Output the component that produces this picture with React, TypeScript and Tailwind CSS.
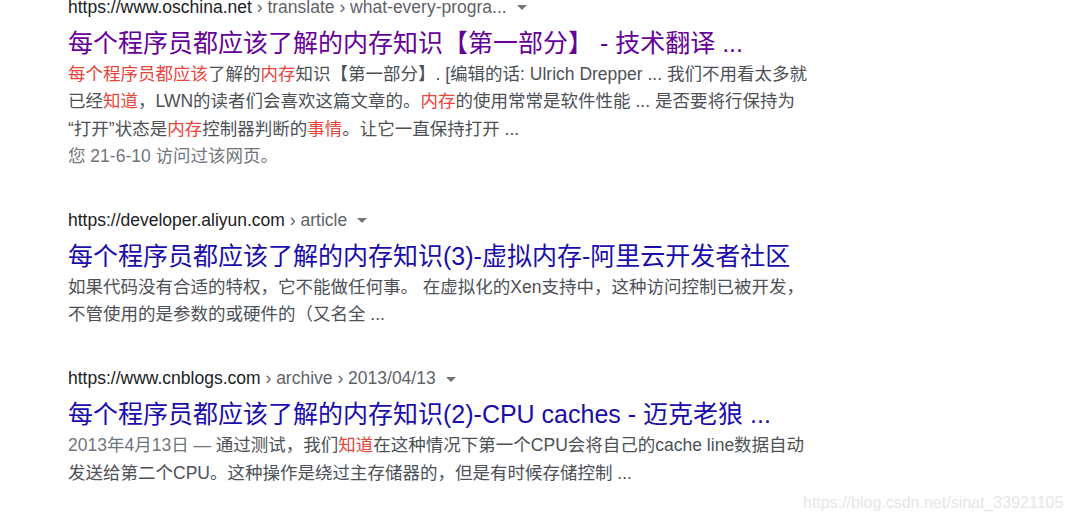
import React from "react";

const font = { fontFamily: '"Liberation Sans", Arial, "Noto Sans CJK SC", sans-serif' };

function Arrow() {
  return (
    <svg width="10" height="6" viewBox="0 0 10 6" className="ml-[10px] inline-block align-middle">
      <path d="M0 0 L10 0 L5 5 Z" fill="#70757a" />
    </svg>
  );
}

function Url({ domain, rest }: { domain: string; rest: string }) {
  return (
    <div className="h-[24px] whitespace-pre text-[17.5px] leading-[24px]">
      <span className="text-[#202124]">{domain}</span>
      <span className="text-[#5f6368]">{rest}</span>
      <Arrow />
    </div>
  );
}

function Title({ text, color }: { text: string; color: string }) {
  return (
    <div className={`mt-[8px] h-[32px] whitespace-nowrap text-[25px] leading-[32px] ${color}`}>{text}</div>
  );
}

const R = ({ children }: { children: React.ReactNode }) => (
  <span className="text-[#e8453c]">{children}</span>
);

function Line({ children, gray }: { children: React.ReactNode; gray?: boolean }) {
  return (
    <div className={`h-[27.4px] whitespace-nowrap text-[17.5px] leading-[27.4px] ${gray ? "text-[#70757a]" : "text-[#4d5156]"}`}>
      {children}
    </div>
  );
}

export default function App() {
  return (
    <div className="relative h-[522px] w-[1071px] overflow-hidden bg-white" style={font}>
      <div className="flex flex-col pl-[68px]">
        <div className="-mt-[5px]">
          <Url domain="https://www.oschina.net" rest=" › translate › what-every-progra..." />
          <Title text="每个程序员都应该了解的内存知识【第一部分】 - 技术翻译 ..." color="text-[#660099]" />
          <div className="mt-[2px]">
            <Line>
              <R>每个程序员都应该</R>了解的<R>内存</R>知识【第一部分】. [编辑的话: Ulrich Drepper ... 我们不用看太多就
            </Line>
            <Line>
              已经<R>知道</R>，LWN的读者们会喜欢这篇文章的。<R>内存</R>的使用常常是软件性能 ... 是否要将行保持为
            </Line>
            <Line>
              “打开”状态是<R>内存</R>控制器判断的<R>事情</R>。让它一直保持打开 ...
            </Line>
            <Line gray>您 21-6-10 访问过该网页。</Line>
          </div>
        </div>

        <div className="mt-[37px]">
          <Url domain="https://developer.aliyun.com" rest=" › article" />
          <Title text="每个程序员都应该了解的内存知识(3)-虚拟内存-阿里云开发者社区" color="text-[#1a0dab]" />
          <div className="mt-[2px]">
            <Line>如果代码没有合适的特权，它不能做任何事。 在虚拟化的Xen支持中，这种访问控制已被开发，</Line>
            <Line>不管使用的是参数的或硬件的（又名全 ...</Line>
          </div>
        </div>

        <div className="mt-[38px]">
          <Url domain="https://www.cnblogs.com" rest=" › archive › 2013/04/13" />
          <Title text="每个程序员都应该了解的内存知识(2)-CPU caches - 迈克老狼 ..." color="text-[#1a0dab]" />
          <div className="mt-[2px]">
            <Line>
              <span className="text-[#70757a]">2013年4月13日 — </span>通过测试，我们<R>知道</R>在这种情况下第一个CPU会将自己的cache line数据自动
            </Line>
            <Line>发送给第二个CPU。这种操作是绕过主存储器的，但是有时候存储控制 ...</Line>
          </div>
        </div>
      </div>

      <div className="absolute left-[803px] top-[493px] whitespace-nowrap text-[16px] leading-[20px] text-[#e6e6e6]">
        https://blog.csdn.net/sinat_33921105
      </div>
    </div>
  );
}
